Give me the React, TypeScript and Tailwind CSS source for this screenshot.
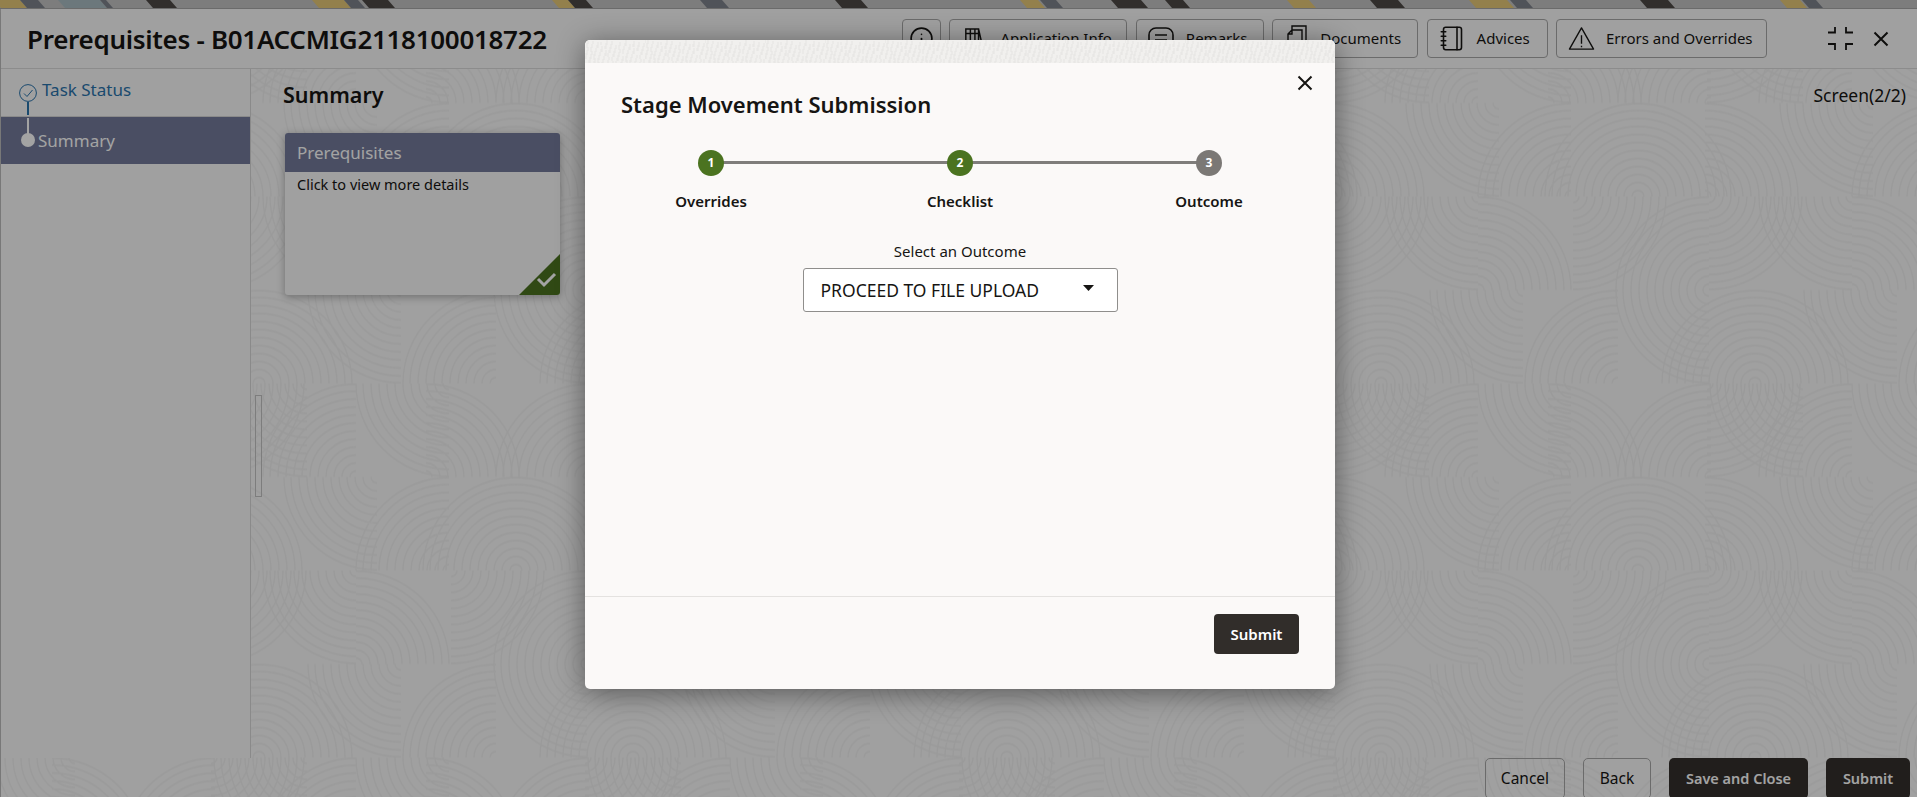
import { Info, Notebook } from "lucide-react";

const RADII = [6, 14, 22, 30, 38, 46, 54, 62, 70, 78, 86, 93];

// quarter circles of the 374px wallpaper tile: [row, centre x, direction]
const ARCS: [number, number, string][] = [
  [0, 210, "BR"], [0, 355, "TL"], [0, 74, "BL"], [0, 51, "TR"], [0, 214, "TL"], [0, 306, "BL"],
  [1, 208, "TR"], [1, 2, "BL"], [1, 74, "TL"], [1, 141, "TL"], [1, 141, "TR"],
  [2, 212, "BR"], [2, 355, "BL"], [2, 355, "TR"], [2, 76, "BR"], [2, 212, "TL"],
  [3, 258, "TL"], [3, 258, "TR"], [3, 26, "BL"], [3, 121, "TL"], [3, 212, "BL"],
];

// slanted bands of the banner peeking out above the panel: [left edge, width, colour]
const BANNER: [number, number, string][] = [
  [-6, 26, "#e6c877"], [20, 18, "#7e838c"], [58, 42, "#aabcc2"], [100, 6, "#7e838c"], [146, 24, "#4d4845"],
  [312, 32, "#e6c877"], [344, 14, "#7e838c"], [362, 26, "#4d4845"], [552, 16, "#e6c877"], [568, 18, "#4d4845"],
  [700, 22, "#7e838c"], [835, 26, "#4d4845"], [1020, 18, "#e6c877"], [1040, 16, "#7e838c"],
  [1111, 30, "#4d4845"], [1165, 18, "#4d4845"], [1287, 22, "#e6c877"], [1370, 28, "#4d4845"],
  [1469, 38, "#e6c877"], [1510, 16, "#7e838c"], [1640, 28, "#4d4845"], [1780, 20, "#e6c877"], [1802, 14, "#7e838c"],
];

function arcPaths() {
  const out: string[] = [];
  for (const [row, cx, dir] of ARCS) {
    const up = dir[0] === "T";
    const left = dir[1] === "L";
    const cy = (row + (up ? 1 : 0)) * 93.5;
    const sy = up ? -1 : 1;
    const sx = left ? -1 : 1;
    const sweep = sx === sy ? 0 : 1;
    for (const shift of [-374, 0, 374]) {
      const x = cx + shift;
      for (const r of RADII) {
        out.push(`M${x} ${cy + sy * r}A${r} ${r} 0 0 ${sweep} ${x + sx * r} ${cy}`);
      }
    }
  }
  return out.join("");
}

function Wallpaper() {
  return (
    <svg className="absolute inset-0 h-full w-full" aria-hidden>
      <defs>
        <pattern id="arcs" width="374" height="374" y="0.5" patternUnits="userSpaceOnUse">
          <path d={arcPaths()} fill="none" stroke="#f1f1f1" strokeWidth="1.3" />
        </pattern>
      </defs>
      <rect width="100%" height="100%" fill="url(#arcs)" />
    </svg>
  );
}

function TopStrip() {
  return (
    <svg className="block h-[8px] w-full" aria-hidden>
      {BANNER.map(([x, w, fill]) => (
        <polygon key={x} points={`${x},0 ${x + w},0 ${x + w + 7},8 ${x + 7},8`} fill={fill} />
      ))}
    </svg>
  );
}

function BandTexture() {
  const marks: string[] = [];
  for (let i = 0; i < 90; i++) {
    const x = (i * 7) % 60;
    const y = (i * 11) % 23;
    marks.push(`M${x} ${y}v${3 + (i % 4)}`);
  }
  return (
    <svg className="block h-[23px] w-full" aria-hidden>
      <defs>
        <pattern id="band" width="60" height="23" patternUnits="userSpaceOnUse">
          <rect width="60" height="23" fill="#f1f0ee" />
          <path d={marks.join("")} stroke="#e6e5e3" strokeWidth="1" />
        </pattern>
      </defs>
      <rect width="100%" height="100%" fill="url(#band)" />
    </svg>
  );
}

function HeaderButton({ className, icon, label }: { className: string; icon: React.ReactNode; label?: string }) {
  return (
    <button className={`flex h-[39px] items-center rounded-[4px] border border-[#a8a8a8] text-[15px] text-[#161513] ${className}`}>
      {icon}
      {label && <span>{label}</span>}
    </button>
  );
}

function BooksIcon() {
  return (
    <svg width="20" height="26" viewBox="0 0 22 26" fill="none" stroke="#161513" strokeWidth="1.6" aria-hidden>
      <path d="M2 2h14v22H2zM2 7h14M7 2v22M12 2v22M16 2l5 22" />
    </svg>
  );
}

function RemarksIcon() {
  return (
    <svg width="26" height="24" viewBox="0 0 26 24" fill="none" stroke="#161513" strokeWidth="1.6" aria-hidden>
      <rect x="1" y="1" width="24" height="20" rx="7" />
      <path d="M7 8h12M7 13h12" />
    </svg>
  );
}

function DocumentsIcon() {
  return (
    <svg width="20" height="28" viewBox="0 0 20 28" fill="none" stroke="#161513" strokeWidth="1.4" aria-hidden>
      <path d="M5 5V1h9l5 0v22M1 9l4-4h10v20H1zM1 9h4V5" />
    </svg>
  );
}

function WarningIcon() {
  return (
    <svg width="27" height="25" viewBox="0 0 28 25" fill="none" stroke="#161513" strokeWidth="1.4" aria-hidden>
      <path d="M14 1.5 1.5 23.5h25zM14 9v9M14 20v1.6" strokeLinejoin="round" />
    </svg>
  );
}

function CompressIcon() {
  return (
    <svg width="25" height="23" viewBox="0 0 25 23" fill="none" stroke="#161513" strokeWidth="1.8" aria-hidden>
      <path d="M0 5.5h7V0M18 0v5.5h7M0 17h7v6M25 17h-7v6" />
    </svg>
  );
}

function CloseIcon({ size }: { size: number }) {
  return (
    <svg width={size} height={size} viewBox="0 0 16 16" fill="none" stroke="#161513" strokeWidth="2" aria-hidden>
      <path d="M1.5 1.5l13 13M14.5 1.5l-13 13" />
    </svg>
  );
}

function Header() {
  return (
    <header className="relative flex h-[60px] shrink-0 items-center border-b border-[#dcdcdc] bg-[#fafafa] pl-[26px]">
      <h1 className="text-[26px] leading-none font-semibold tracking-[-0.3px] text-[#161513]">Prerequisites - B01ACCMIG2118100018722</h1>
      <div className="ml-auto flex items-center gap-[8.4px]">
        <HeaderButton className="w-[39px] pl-[6px]" icon={<Info size={25} strokeWidth={1.6} className="shrink-0" />} />
        <HeaderButton className="w-[178px] gap-[16px] pl-[14px]" icon={<BooksIcon />} label="Application Info" />
        <HeaderButton className="w-[128px] gap-[12px] pl-[11px]" icon={<RemarksIcon />} label="Remarks" />
        <HeaderButton className="w-[146px] gap-[13px] pl-[14px]" icon={<DocumentsIcon />} label="Documents" />
        <HeaderButton className="w-[121px] gap-[11px] pl-[11px]" icon={<Notebook size={27} strokeWidth={1.4} className="shrink-0" />} label="Advices" />
        <HeaderButton className="w-[211px] gap-[11px] pl-[11px]" icon={<WarningIcon />} label="Errors and Overrides" />
      </div>
      <div className="mr-[28px] ml-[61px] flex items-center gap-[20px]">
        <CompressIcon />
        <CloseIcon size={16} />
      </div>
    </header>
  );
}

function Sidebar() {
  return (
    <aside className="relative w-[250px] shrink-0 border-r border-[#d8d8d8] bg-[#fafafa]">
      <div className="flex h-[48px] items-start border-b border-[#d8d8d8] pt-[9px] pl-[41px] text-[17px] leading-[24px] text-[#2a74ad]">
        Task Status
      </div>
      <div className="flex h-[47px] items-center bg-[#747b9b] pl-[37px] text-[17px] text-white">Summary</div>
      <svg className="absolute top-[15px] left-[18px] h-[18px] w-[18px]" viewBox="0 0 18 18" fill="none" stroke="#2a74ad" strokeWidth="1" aria-hidden>
        <circle cx="9" cy="9" r="8.4" />
        <path d="M5 9.5l3 3 5.5-6.5" />
      </svg>
      <span className="absolute top-[33px] left-[26px] h-[13px] w-[2px] bg-[#2a74ad]" />
      <span className="absolute top-[49px] left-[26px] h-[16px] w-[2px] bg-white" />
      <span className="absolute top-[64px] left-[20px] h-[14px] w-[14px] rounded-full bg-white" />
    </aside>
  );
}

function SummaryCard() {
  return (
    <div className="relative h-[162px] w-[275px] overflow-hidden rounded-[3px] bg-[#fafafa] shadow-[0_2px_8px_rgba(0,0,0,0.3)]">
      <div className="flex h-[39px] items-center bg-[#747b9b] pl-[12px] text-[17px] text-white">Prerequisites</div>
      <p className="pt-[1px] pl-[12px] text-[14.5px] leading-[22px] text-[#161513]">Click to view more details</p>
      <svg className="absolute right-0 bottom-0 h-[41px] w-[41px]" viewBox="0 0 41 41" aria-hidden>
        <polygon points="41,0 41,41 0,41" fill="#4b7320" />
        <path d="M20 28l6 6 11-11" fill="none" stroke="white" strokeWidth="3" transform="translate(-1 -3)" />
      </svg>
    </div>
  );
}

function Step({ n, label, done }: { n: number; label: string; done: boolean }) {
  return (
    <div className="relative flex w-[100px] flex-col items-center">
      <span className={`flex h-[26px] w-[26px] items-center justify-center rounded-full text-[12px] font-bold text-white ${done ? "bg-[#4b7320]" : "bg-[#7b7875]"}`}>
        {n}
      </span>
      <span className="mt-[14px] text-[15px] leading-[22px] font-semibold text-[#161513]">{label}</span>
    </div>
  );
}

function SubmissionModal() {
  return (
    <div className="absolute inset-0 bg-black/36 pt-[40px] pl-[585px]">
      <div className="relative flex h-[649px] w-[750px] flex-col overflow-hidden rounded-[5px] bg-[#fbf9f8] shadow-[0_4px_28px_rgba(0,0,0,0.45)]">
        <BandTexture />
        <button className="absolute top-[35px] right-[22px]">
          <CloseIcon size={16} />
        </button>
        <h2 className="mt-[27px] pl-[36px] text-[22px] leading-[28px] font-semibold text-[#161513]">Stage Movement Submission</h2>
        <div className="relative mx-auto mt-[32px] flex w-[598px] justify-between">
          <span className="absolute top-[11px] right-[50px] left-[50px] h-[3px] bg-[#7f7d7b]" />
          <Step n={1} label="Overrides" done />
          <Step n={2} label="Checklist" done />
          <Step n={3} label="Outcome" done={false} />
        </div>
        <div className="mt-[28px] flex flex-col items-center">
          <label className="text-[15px] leading-[22px] text-[#161513]">Select an Outcome</label>
          <div className="mt-[6px] flex h-[44px] w-[315px] items-center justify-between rounded-[3px] border border-[#8f8e8c] bg-white pr-[23px] pl-[17px] text-[17.5px] text-[#161513]">
            <span>PROCEED TO FILE UPLOAD</span>
            <svg width="11" height="6" viewBox="0 0 11 6" className="-mt-[4px]" aria-hidden>
              <polygon points="0,0 11,0 5.5,6" fill="#161513" />
            </svg>
          </div>
        </div>
        <div className="mt-auto flex h-[93px] items-start justify-end border-t border-[#e4e2e0] pt-[17px] pr-[36px]">
          <button className="h-[40px] w-[85px] rounded-[4px] bg-[#312d2a] text-[15px] font-semibold text-white">Submit</button>
        </div>
      </div>
    </div>
  );
}

export default function App() {
  return (
    <div className="relative h-[797px] w-[1917px] overflow-hidden bg-[#c4c4c4] font-['Noto_Sans',sans-serif]">
      <TopStrip />
      <div className="h-px bg-[#a8a8a8]" />
      <div className="relative flex h-[788px] flex-col rounded-tl-[4px] border-l border-[#bcbcbc] bg-[#fafafa]">
        <Wallpaper />
        <Header />
        <div className="relative flex h-[689px] shrink-0">
          <Sidebar />
          <main className="relative flex-1">
            <div className="flex items-center justify-between pt-[11px] pr-[11px] pl-[32px]">
              <h2 className="text-[21.5px] leading-[30px] font-semibold text-[#161513]">Summary</h2>
              <span className="text-[17.5px] text-[#161513]">Screen(2/2)</span>
            </div>
            <div className="mt-[23px] pl-[34px]">
              <SummaryCard />
            </div>
            <span className="absolute top-[326px] left-[4px] h-[102px] w-[7px] border border-[#c4c4c4]" />
          </main>
        </div>
        <footer className="relative flex shrink-0 justify-end gap-[18px] pr-[7px]">
          <button className="h-[41px] w-[80px] rounded-[5px] border border-[#a8a8a8] text-[15.5px] text-[#161513]">Cancel</button>
          <button className="h-[41px] w-[68px] rounded-[5px] border border-[#a8a8a8] text-[15.5px] text-[#161513]">Back</button>
          <button className="h-[41px] w-[139px] rounded-[5px] bg-[#35302c] text-[14.5px] font-semibold text-white">Save and Close</button>
          <button className="h-[41px] w-[84px] rounded-[5px] bg-[#35302c] text-[14.5px] font-semibold text-white">Submit</button>
        </footer>
      </div>
      <SubmissionModal />
    </div>
  );
}
